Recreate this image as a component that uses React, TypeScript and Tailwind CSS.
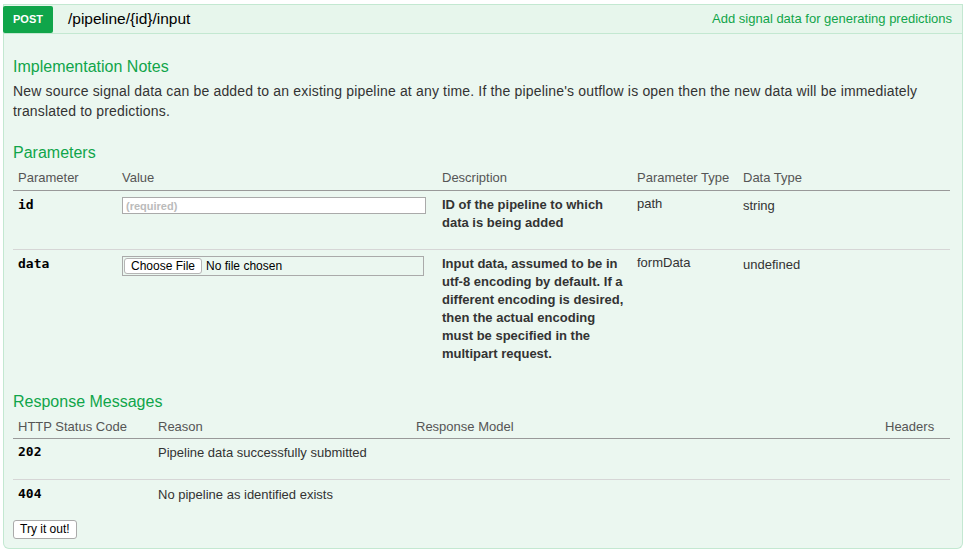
const sans = "font-['Liberation_Sans',Arial,sans-serif]";

function ParamRow({
  name,
  value,
  desc,
  paramType,
  dataType,
  last,
}: {
  name: string;
  value: React.ReactNode;
  desc: string[];
  paramType: string;
  dataType: string;
  last?: boolean;
}) {
  return (
    <tr className={last ? '' : 'border-b border-[#d6d6d6]'}>
      <td className="pl-[5px] pt-[5px] align-top font-['DejaVu_Sans_Mono',monospace] text-[13px] leading-[18px] font-bold text-black">
        {name}
      </td>
      <td className="pl-[5px] pt-[6px] align-top">{value}</td>
      <td className={`pl-[5px] pt-[5px] align-top text-[13px] leading-[18px] font-bold text-[#333] ${last ? 'pb-[10px]' : 'pb-[17px]'}`}>
        {desc.map((l) => (
          <div key={l}>{l}</div>
        ))}
      </td>
      <td className="pl-[5px] pt-[4px] align-top text-[13px] leading-[18px] text-[#333]">{paramType}</td>
      <td className="pl-[5px] pt-[6px] align-top text-[13px] leading-[18px] text-[#333]">{dataType}</td>
    </tr>
  );
}

function App() {
  return (
    <div className={`${sans} min-h-[553px] bg-white pl-[3px] pr-[2px] pt-[4px] text-[#333]`}>
      {/* header bar */}
      <div className="flex h-[30px] items-center border border-[#c3e8d1] bg-[#e7f6ec]">
        <span className="-ml-px mt-[1px] flex h-[27px] w-[50px] items-center justify-center rounded-[2px] bg-[#10a54a] text-[11px] font-bold text-white">
          POST
        </span>
        <span className="ml-[15px] text-[15.5px] text-black">/pipeline/{'{id}'}/input</span>
        <span className="ml-auto mr-[10px] text-[13px] text-[#10a54a]">
          Add signal data for generating predictions
        </span>
      </div>

      {/* body */}
      <div className="h-[515px] rounded-b-[6px] border border-t-0 border-[#c3e8d1] bg-[#ebf7f0] pl-[9px] pr-[10px] pt-[23px]">
        <h4 className="text-[16px] leading-[20px] text-[#10a54a]">Implementation Notes</h4>
        <p className="mt-[4px] text-[14px] leading-[20px] tracking-[0.17px] text-[#333]">
          New source signal data can be added to an existing pipeline at any time. If the pipeline's outflow is open then the new data will be immediately translated to predictions.
        </p>

        <h4 className="mt-[22px] text-[16px] leading-[20px] text-[#10a54a]">Parameters</h4>
        <table className="mt-[6px] w-[937px] table-fixed border-collapse">
          <colgroup>
            <col className="w-[104px]" />
            <col className="w-[320px]" />
            <col className="w-[195px]" />
            <col className="w-[106px]" />
            <col />
          </colgroup>
          <thead>
            <tr className="border-b border-[#999]">
              <th className="pb-[3px] pl-[5px] text-left text-[13px] leading-[18px] font-normal text-[#555]">Parameter</th>
              <th className="pb-[3px] pl-[5px] text-left text-[13px] leading-[18px] font-normal text-[#555]">Value</th>
              <th className="pb-[3px] pl-[5px] text-left text-[13px] leading-[18px] font-normal text-[#555]">Description</th>
              <th className="pb-[3px] pl-[5px] text-left text-[13px] leading-[18px] font-normal text-[#555]">Parameter Type</th>
              <th className="pb-[3px] pl-[5px] text-left text-[13px] leading-[18px] font-normal text-[#555]">Data Type</th>
            </tr>
          </thead>
          <tbody>
            <ParamRow
              name="id"
              value={
                <input
                  placeholder="(required)"
                  className="block h-[17px] w-[304px] border border-[#aaa] bg-white px-[3px] text-[11px] font-bold text-black placeholder:text-[#bbb]"
                />
              }
              desc={['ID of the pipeline to which', 'data is being added']}
              paramType="path"
              dataType="string"
            />
            <ParamRow
              name="data"
              value={
                <div className="flex h-[20px] w-[302px] items-center border border-[#aaa] bg-[#ebf7f0] px-[1px] text-[12px] text-black">
                  <span className="flex h-[16px] items-center rounded-[3px] border border-[#b5b5b5] bg-white px-[6px]">
                    Choose File
                  </span>
                  <span className="ml-[4px]">No file chosen</span>
                </div>
              }
              desc={[
                'Input data, assumed to be in',
                'utf-8 encoding by default. If a',
                'different encoding is desired,',
                'then the actual encoding',
                'must be specified in the',
                'multipart request.',
              ]}
              paramType="formData"
              dataType="undefined"
              last
            />
          </tbody>
        </table>

        <h4 className="mt-[19px] text-[16px] leading-[20px] text-[#10a54a]">Response Messages</h4>
        <table className="mt-[6px] w-[937px] table-fixed border-collapse">
          <colgroup>
            <col className="w-[140px]" />
            <col className="w-[258px]" />
            <col className="w-[469px]" />
            <col />
          </colgroup>
          <thead>
            <tr className="border-b border-[#999]">
              <th className="pb-[2px] pl-[5px] text-left text-[13px] leading-[18px] font-normal text-[#555]">HTTP Status Code</th>
              <th className="pb-[2px] pl-[5px] text-left text-[13px] leading-[18px] font-normal text-[#555]">Reason</th>
              <th className="pb-[2px] pl-[5px] text-left text-[13px] leading-[18px] font-normal text-[#555]">Response Model</th>
              <th className="pb-[2px] pl-[5px] text-left text-[13px] leading-[18px] font-normal text-[#555]">Headers</th>
            </tr>
          </thead>
          <tbody>
            <tr className="border-b border-[#d6d6d6]">
              <td className="h-[41px] pl-[5px] pt-[4px] align-top font-['DejaVu_Sans_Mono',monospace] text-[13px] leading-[18px] font-bold text-black">202</td>
              <td className="pl-[5px] pt-[5px] align-top text-[13px] leading-[18px] text-[#333]">Pipeline data successfully submitted</td>
              <td />
              <td />
            </tr>
            <tr>
              <td className="h-[30px] pl-[5px] pt-[5px] align-top font-['DejaVu_Sans_Mono',monospace] text-[13px] leading-[18px] font-bold text-black">404</td>
              <td className="pl-[5px] pt-[6px] align-top text-[13px] leading-[18px] text-[#333]">No pipeline as identified exists</td>
              <td />
              <td />
            </tr>
          </tbody>
        </table>

        <button className="mt-[10px] h-[19px] rounded-[3px] border border-[#aaa] bg-white px-[6px] text-[12px] leading-none text-black">
          Try it out!
        </button>
      </div>
    </div>
  );
}

export default App;
